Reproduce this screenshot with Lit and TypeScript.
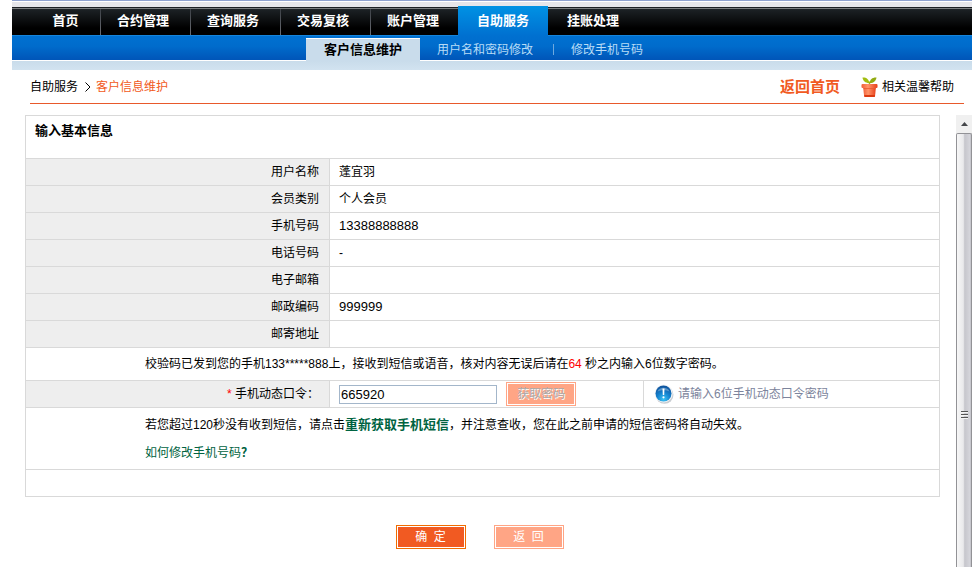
import { LitElement, html, css } from "lit";
import { customElement, property, state } from "lit/decorators.js";
import { classMap } from "lit/directives/class-map.js";

const base = css`
  :host {
    display: block;
    font: 12px/18px "Liberation Sans", "Noto Sans CJK SC", sans-serif;
    color: #000;
  }
  * {
    box-sizing: border-box;
  }
  a {
    color: inherit;
    text-decoration: none;
  }
  svg {
    display: block;
    flex: none;
  }
`;

@customElement("site-nav")
class SiteNav extends LitElement {
  @property() active = "自助服务";
  @property() activeSub = "客户信息维护";

  private items = ["首页", "合约管理", "查询服务", "交易复核", "账户管理", "自助服务", "挂账处理"];
  private subItems = ["客户信息维护", "用户名和密码修改", "修改手机号码"];

  static styles = [
    base,
    css`
      .strip {
        height: 6px;
        background: linear-gradient(#8fa2cf 1px, #fff 1px 2px, #e6e6ea 2px);
      }
      .main {
        display: flex;
        height: 30px;
        padding-left: 21px;
        background: linear-gradient(
          #e6e6ea 1px,
          #1c2024 1px 2px,
          #7b7e80 2px 3px,
          #1d2226 3px,
          #000 22px 29px,
          #1585dc 29px
        );
      }
      .tab {
        width: 90px;
        font-size: 13px;
        line-height: 30px;
        font-weight: bold;
        color: #fff;
        text-align: center;
        background: linear-gradient(#3c4046, #6a6d74) 2px 3px / 1px 26px no-repeat;
      }
      .tab.first {
        width: 65px;
        background: none;
      }
      .tab.last {
        background: none;
      }
      .tab.on {
        background: linear-gradient(#0092e4, #0070d0);
      }
      .sub {
        display: flex;
        align-items: flex-end;
        height: 25px;
        padding-left: 294px;
        background: linear-gradient(#0070d0, #006ccc 10px, #0055b8 24px, #fff 24px);
      }
      .subtab {
        padding: 0 16px 0 17px;
        line-height: 21px;
        color: #b8dcf6;
      }
      .subtab.on {
        height: 23px;
        padding: 0 18px;
        border-top: 1px solid #fff;
        background: #c9dceb;
        color: #000;
        font-size: 13px;
        font-weight: bold;
      }
      .bar {
        width: 1px;
        height: 11px;
        margin: 0 0 6px 4px;
        background: #6ea9df;
      }
      .shade {
        height: 9px;
        background: linear-gradient(#c9dceb, #d2e3f0);
      }
    `,
  ];

  render() {
    const last = this.items.length - 1;
    return html`
      <div class="strip"></div>
      <nav class="main">
        ${this.items.map(
          (t, i) => html`<a
            href="#"
            class=${classMap({ tab: true, first: i === 0, last: i === last, on: t === this.active })}
            >${t}</a
          >`
        )}
      </nav>
      <nav class="sub">
        ${this.subItems.map(
          (t, i) => html`${i > 1 ? html`<span class="bar"></span>` : ""}<a
              href="#"
              class=${classMap({ subtab: true, on: t === this.activeSub })}
              >${t}</a
            >`
        )}
      </nav>
      <div class="shade"></div>
    `;
  }
}

@customElement("crumb-bar")
class CrumbBar extends LitElement {
  static styles = [
    base,
    css`
      .row {
        display: flex;
        align-items: center;
        height: 34px;
        padding: 1px 10px 0 0;
        border-bottom: 1px solid #e8592b;
      }
      .chevron {
        margin: 0 5px 0 7px;
      }
      .here,
      .home {
        color: #f15a22;
      }
      .home {
        margin-left: auto;
        font-size: 15px;
        font-weight: bold;
      }
      .help {
        display: flex;
        align-items: center;
        gap: 4px;
        margin-left: 21px;
      }
    `,
  ];

  render() {
    return html`
      <div class="row">
        <span>自助服务</span>
        <svg class="chevron" width="6" height="10" viewBox="0 0 6 10">
          <path d="M.5 .5 5 5 .5 9.5" fill="none" stroke="#000" />
        </svg>
        <span class="here">客户信息维护</span>
        <a class="home" href="#">返回首页</a>
        <a class="help" href="#">
          <svg width="17" height="20" viewBox="0 0 17 20">
            <defs>
              <linearGradient id="pot" x2="1">
                <stop stop-color="#f0603a" />
                <stop offset=".4" stop-color="#ff9468" />
                <stop offset="1" stop-color="#e8401a" />
              </linearGradient>
            </defs>
            <path d="M8.500 4.500V8" stroke="#9bb51c" stroke-width="1.500" />
            <path d="M8.300 6C4.500 6.200 2 4 1.500 .5 5.200 .2 8 2.200 8.300 6Z" fill="#a2bd10" />
            <path d="M8.700 6C8.800 2.400 11.500 .2 15.500 .5 15 4.200 12.300 6.200 8.700 6Z" fill="#92ab12" />
            <path d="M2 9.500H15L14 19.500H3.200Z" fill="url(#pot)" />
            <path d="M3.200 18H14L13.800 20H3.400Z" fill="#dc3a10" />
            <rect x=".5" y="7" width="16" height="4" rx="1" fill="url(#pot)" />
            <path d="M2.500 11.500H14.500" stroke="#e85a30" stroke-width=".8" />
          </svg>
          相关温馨帮助
        </a>
      </div>
    `;
  }
}

@customElement("info-form")
class InfoForm extends LitElement {
  @state() private seconds = 64;

  private rows: [string, string][] = [
    ["用户名称", "蓬宜羽"],
    ["会员类别", "个人会员"],
    ["手机号码", "13388888888"],
    ["电话号码", "-"],
    ["电子邮箱", ""],
    ["邮政编码", "999999"],
    ["邮寄地址", ""],
  ];

  static styles = [
    base,
    css`
      table {
        width: 100%;
        table-layout: fixed;
        border-collapse: collapse;
      }
      .c1 {
        width: 304px;
      }
      .c2 {
        width: 314px;
      }
      td,
      th {
        height: 27px;
        padding: 0 10px 0 9px;
        border: 1px solid #d9d9d9;
        text-align: left;
        font-weight: normal;
        vertical-align: middle;
      }
      th.label {
        background: #eee;
        text-align: right;
      }
      .title {
        height: 43px;
        padding-top: 6px;
        vertical-align: top;
        font-size: 13px;
        font-weight: bold;
      }
      .num {
        font-size: 13px;
      }
      .sent {
        height: 33px;
        padding-left: 119px;
      }
      .resend {
        height: 62px;
        padding-left: 119px;
        line-height: 28px;
      }
      .resend p {
        margin: 0;
      }
      .star,
      .left {
        color: #f00;
      }
      .green {
        color: #006341;
      }
      .entry,
      .hint {
        display: flex;
        align-items: center;
      }
      .entry {
        gap: 9px;
      }
      .hint {
        gap: 4px;
        padding-left: 1px;
        color: #7c849c;
      }
      input {
        width: 158px;
        height: 19px;
        padding: 0 1px;
        border: 1px solid #a3b6ca;
        font: 13px/17px "Liberation Sans", "Noto Sans CJK SC", sans-serif;
      }
      button {
        width: 70px;
        height: 24px;
        padding: 0;
        border: 1px solid #f06c00;
        background: #f15a22;
        box-shadow: inset 0 0 0 1px #fff;
        color: #fff;
        font: inherit;
        white-space: pre;
      }
      .pale {
        border-color: #ffa585;
        background: #ffa585;
      }
      button:disabled {
        color: #aaa;
        text-shadow: 1px 1px #fff;
      }
      .actions {
        display: flex;
        justify-content: center;
        gap: 28px;
        margin-top: 28px;
        padding-right: 6px;
      }
    `,
  ];

  render() {
    return html`
      <form @submit=${(e: Event) => e.preventDefault()}>
        <table>
          <colgroup>
            <col class="c1" />
            <col class="c2" />
            <col />
          </colgroup>
          <tbody>
            <tr>
              <th class="title" colspan="3">输入基本信息</th>
            </tr>
            ${this.rows.map(
              ([k, v]) => html`<tr>
                <th class="label" scope="row">${k}</th>
                <td class=${classMap({ num: /^\d+$/.test(v) })} colspan="2">${v}</td>
              </tr>`
            )}
            <tr>
              <td class="sent" colspan="3">
                校验码已发到您的手机133*****888上，接收到短信或语音，核对内容无误后请在<span class="left"
                  >${this.seconds}</span
                >
                秒之内输入6位数字密码。
              </td>
            </tr>
            <tr>
              <th class="label" scope="row">
                <label for="otp"><span class="star">*</span> 手机动态口令：</label>
              </th>
              <td>
                <div class="entry">
                  <input id="otp" type="text" inputmode="numeric" .value=${"665920"} />
                  <button class="pale" type="button" disabled>获取密码</button>
                </div>
              </td>
              <td>
                <div class="hint">
                  <svg width="20" height="20" viewBox="0 0 20 20">
                    <defs>
                      <radialGradient id="ball" cx=".5" cy=".85" r=".8">
                        <stop stop-color="#39c4f5" />
                        <stop offset=".5" stop-color="#1583cf" />
                        <stop offset="1" stop-color="#0f559f" />
                      </radialGradient>
                    </defs>
                    <circle cx="10.500" cy="10.800" r="9" fill="#c9cdd2" />
                    <circle cx="9.700" cy="9.500" r="9" fill="#f1f3f5" />
                    <circle cx="9.500" cy="9.500" r="8" fill="url(#ball)" />
                    <path d="M3.500 7.500A6.500 6 0 0 1 15.500 7.500Q9.500 4.500 3.500 7.500Z" fill="#fff" opacity=".3" />
                    <path d="M8.500 4.500H10.500L10.200 11H8.800Z" fill="#fff" />
                    <circle cx="9.500" cy="13.300" r="1.100" fill="#fff" />
                  </svg>
                  请输入6位手机动态口令密码
                </div>
              </td>
            </tr>
            <tr>
              <td class="resend" colspan="3">
                <p>
                  若您超过120秒没有收到短信，请点击<a class="green" href="#"
                    ><b class="num">重新获取手机短信</b></a
                  >，并注意查收，您在此之前申请的短信密码将自动失效。
                </p>
                <p><a class="green" href="#">如何修改手机号码<b>？</b></a></p>
              </td>
            </tr>
            <tr>
              <td colspan="3"></td>
            </tr>
          </tbody>
        </table>
        <div class="actions">
          <button type="submit">${"确\u00a0\u00a0定"}</button>
          <button class="pale" type="button">${"返\u00a0\u00a0回"}</button>
        </div>
      </form>
    `;
  }
}

@customElement("scroll-rail")
class ScrollRail extends LitElement {
  static styles = [
    base,
    css`
      :host {
        display: flex;
        flex-direction: column;
        width: 16px;
        background: #f0f0f0;
      }
      .up {
        display: grid;
        place-items: center;
        height: 18px;
      }
      .thumb {
        flex: 1;
        display: grid;
        place-items: start center;
        padding-top: 277px;
        border: 1px solid #929296;
        border-bottom: 0;
        border-radius: 2px 2px 0 0;
        background: linear-gradient(90deg, #f7f7f7, #e9e9eb 45%, #c6c6cc 55%, #d4d4da 90%, #c0c0c6);
      }
    `,
  ];

  render() {
    return html`
      <div class="up">
        <svg width="7" height="4" viewBox="0 0 7 4"><path d="M3.500 0 7 4H0Z" fill="#44464a" /></svg>
      </div>
      <div class="thumb">
        <svg width="7" height="8" viewBox="0 0 7 8">
          <path d="M0 .5H7M0 3.500H7M0 6.500H7" stroke="#555" />
          <path d="M0 1.500H7M0 4.500H7M0 7.500H7" stroke="#f4f4f4" />
        </svg>
      </div>
    `;
  }
}

@customElement("app-root")
class AppRoot extends LitElement {
  static styles = [
    base,
    css`
      :host {
        display: flex;
        flex-direction: column;
        min-height: 100vh;
        padding: 0 8px 0 12px;
        background: #fff;
      }
      crumb-bar {
        margin: 0 8px 0 18px;
      }
      main {
        flex: 1;
        display: flex;
        gap: 16px;
        padding: 11px 0 0 13px;
      }
      info-form {
        flex: 1;
      }
    `,
  ];

  render() {
    return html`
      <site-nav></site-nav>
      <crumb-bar></crumb-bar>
      <main>
        <info-form></info-form>
        <scroll-rail aria-hidden="true"></scroll-rail>
      </main>
    `;
  }
}
